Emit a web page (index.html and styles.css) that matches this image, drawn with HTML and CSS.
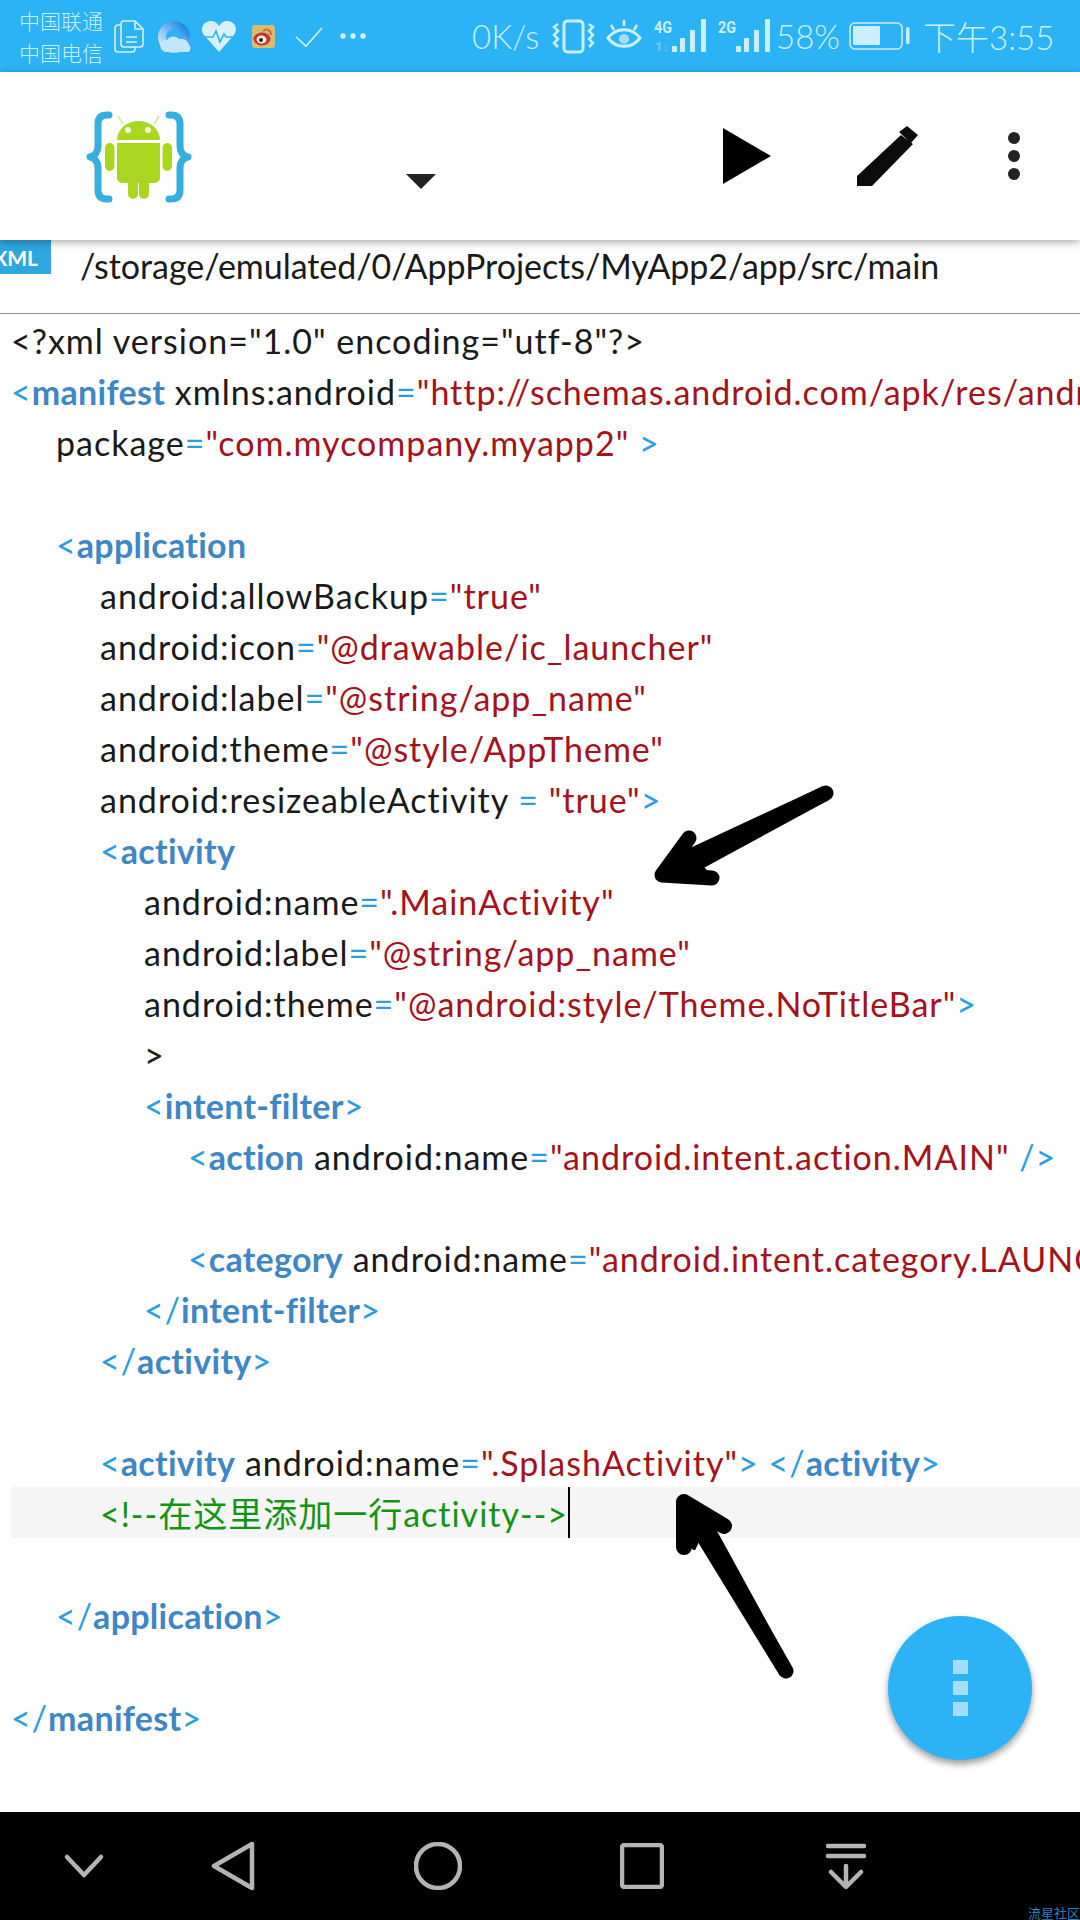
FILE: index.html
```html
<!DOCTYPE html>
<html lang="zh">
<head>
<meta charset="utf-8">
<title>AIDE</title>
<link rel="stylesheet" href="styles.css">
</head>
<body>
<div class="page">
  <header class="status">
    <div class="carriers"><span>中国联通</span><span>中国电信</span></div>
    <svg class="st-left" width="265" height="60" viewBox="110 6 265 60">
      <defs>
        <linearGradient id="brow" x1="0" y1="1" x2="1" y2="0">
          <stop offset="0" stop-color="#d9f0fd"/><stop offset="1" stop-color="#1483e6"/>
        </linearGradient>
      </defs>
      <g fill="none" stroke="#d8f1fd" stroke-width="1.6" stroke-linejoin="round">
        <path d="M121 25h-3a3 3 0 0 0-3 3v21a3 3 0 0 0 3 3h14a3 3 0 0 0 3-3v-2"/>
        <path d="M124 21h11l8 8v15a3 3 0 0 1-3 3h-16a3 3 0 0 1-3-3v-20a3 3 0 0 1 3-3z"/>
        <path d="M135 21v8h8"/>
        <path d="M126 37h11M126 42h11"/>
      </g>
      <circle cx="174" cy="37" r="12" fill="none" stroke="url(#brow)" stroke-width="8"/>
      <path d="M166 52a6 6 0 0 1 1-12c2-4 9-5 12-1 5-1 9 2 10 6 2 1 2 7-1 7z" fill="#c3e6fb"/>
      <path d="M219 52l-15-17c-5-7 0-14 7-14 4 0 6 2 8 5 2-3 4-5 8-5 7 0 12 7 7 14z" fill="#d8f1fd"/>
      <path d="M204 37h9l3-6 4 11 4-8 2 3h9" fill="none" stroke="#2db2f5" stroke-width="1.6"/>
      <rect x="252" y="25" width="23" height="23" rx="3" fill="#d5bf6c"/>
      <ellipse cx="262" cy="39" rx="8.5" ry="6.5" fill="#c8352f"/>
      <ellipse cx="261.500" cy="39.500" rx="5" ry="4" fill="#f4efe2"/>
      <circle cx="261" cy="40" r="2" fill="#222"/>
      <path d="M263 31c4-3 8-1 8 4" fill="none" stroke="#d9662c" stroke-width="2"/>
      <path d="M296 37l10 9 16-18" fill="none" stroke="#d8f1fd" stroke-width="1.6"/>
      <g fill="#d8f1fd"><circle cx="343" cy="36" r="2.700"/><circle cx="353" cy="36" r="2.700"/><circle cx="363" cy="36" r="2.700"/></g>
    </svg>
    <span class="speed">0K/s</span>
    <svg class="st-right" width="220" height="60" viewBox="550 6 220 60">
      <g fill="none" stroke="#cdeefd" stroke-width="3">
        <rect x="564" y="21" width="19" height="31" rx="3.500"/>
        <path d="M558 24l-4 3 4 4-4 4 4 4-4 4 4 4M589 24l4 3-4 4 4 4-4 4 4 4-4 4" stroke-width="2.500"/>
        <path d="M608 38c8-11 24-11 32 0-8 11-24 11-32 0z"/>
        <path d="M611 25l3 5M624 20v6M637 25l-3 5" stroke-width="2.500"/>
      </g>
      <circle cx="624" cy="39" r="5" fill="#a7dcf8"/>
      <text class="net" x="654" y="33" textLength="18" lengthAdjust="spacingAndGlyphs">4G</text>
      <text class="net dim" x="655" y="51">1↓</text>
      <text class="net" x="718" y="33" textLength="18" lengthAdjust="spacingAndGlyphs">2G</text>
      <g fill="#cdeefd">
        <rect x="672" y="46" width="5" height="6" rx="1"/><rect x="680" y="38" width="5" height="14" rx="1"/><rect x="690" y="30" width="5" height="22" rx="1"/><rect x="701" y="19" width="5" height="33" rx="1"/>
        <rect x="736" y="46" width="5" height="6" rx="1"/><rect x="744" y="38" width="5" height="14" rx="1"/><rect x="754" y="30" width="5" height="22" rx="1"/><rect x="765" y="19" width="5" height="33" rx="1"/>
      </g>
    </svg>
    <span class="pct">58%</span>
    <svg class="batt" width="62" height="30" viewBox="0 0 62 30">
      <rect x="1" y="2" width="52" height="26" rx="5" fill="none" stroke="#cdeefd" stroke-width="1.500"/>
      <rect x="4" y="5" width="27" height="19" rx="1" fill="#cdeefd"/>
      <rect x="57" y="6" width="3.500" height="17" rx="1.500" fill="#cdeefd"/>
    </svg>
    <span class="time">下午3:55</span>
  </header>

  <div class="toolbar">
    <svg class="logo" width="130" height="110" viewBox="0 0 130 110">
      <g fill="none" stroke="#35aee0" stroke-width="7" stroke-linecap="round" stroke-linejoin="round">
        <path d="M36 15h-2c-6 0-9 3-9 9v22c0 6-3 10-8 11 5 1 8 5 8 11v22c0 6 3 9 9 9h2"/>
        <path d="M96 15h2c6 0 9 3 9 9v22c0 6 3 10 8 11-5 1-8 5-8 11v22c0 6-3 9-9 9h-2"/>
      </g>
      <path d="M50 24l-5-8M81 24l5-8" stroke="#d6e59a" stroke-width="1.500"/>
      <g fill="#aad521">
        <path d="M44 40a21.500 19 0 0 1 43 0z"/>
        <path d="M44 43h43v35a5 5 0 0 1-5 5h-6v11a5 5 0 0 1-10 0v-11h-1v11a5 5 0 0 1-10 0v-11h-6a5 5 0 0 1-5-5z"/>
        <rect x="32" y="43" width="9.500" height="28" rx="4.700"/>
        <rect x="89.500" y="43" width="9.500" height="28" rx="4.700"/>
      </g>
      <circle cx="55" cy="30" r="3" fill="#f2f8d8"/>
      <circle cx="75" cy="30" r="3" fill="#f2f8d8"/>
    </svg>
    <div class="caret"></div>
    <svg class="tb-play" width="48" height="56" viewBox="0 0 48 56"><path d="M0 0l48 28L0 56z" fill="#000"/></svg>
    <svg class="tb-edit" width="62" height="60" viewBox="0 0 62 60"><path d="M0 60V50L44 9l12 9-41 42zM42 6l8-6 11 9-7 8z" fill="#0c0c0c"/></svg>
    <div class="kebab"><i></i><i></i><i></i></div>
  </div>

  <div class="pathbar">
    <div class="badge"><span>XML</span></div>
    <div class="path">/storage/emulated/0/AppProjects/MyApp2/app/src/main</div>
  </div>

  <main class="code">
    <div class="ln">&lt;?xml version="1.0" encoding="utf-8"?&gt;</div>
    <div class="ln"><b>&lt;</b><em>manifest</em> xmlns:android<b>=</b><s>"http://schemas.android.com/apk/res/android"</s></div>
    <div class="ln i1">package<b>=</b><s>"com.mycompany.myapp2"</s> <b>&gt;</b></div>
    <div class="ln"></div>
    <div class="ln i1"><b>&lt;</b><em>application</em></div>
    <div class="ln i2">android:allowBackup<b>=</b><s>"true"</s></div>
    <div class="ln i2">android:icon<b>=</b><s>"@drawable/ic_launcher"</s></div>
    <div class="ln i2">android:label<b>=</b><s>"@string/app_name"</s></div>
    <div class="ln i2">android:theme<b>=</b><s>"@style/AppTheme"</s></div>
    <div class="ln i2">android:resizeableActivity <b>=</b> <s>"true"</s><b>&gt;</b></div>
    <div class="ln i2"><b>&lt;</b><em>activity</em></div>
    <div class="ln i3">android:name<b>=</b><s>".MainActivity"</s></div>
    <div class="ln i3">android:label<b>=</b><s>"@string/app_name"</s></div>
    <div class="ln i3">android:theme<b>=</b><s>"@android:style/Theme.NoTitleBar"</s><b>&gt;</b></div>
    <div class="ln i3">&gt;</div>
    <div class="ln i3"><b>&lt;</b><em>intent-filter</em><b>&gt;</b></div>
    <div class="ln i4"><b>&lt;</b><em>action</em> android:name<b>=</b><s>"android.intent.action.MAIN"</s> <b>/&gt;</b></div>
    <div class="ln"></div>
    <div class="ln i4"><b>&lt;</b><em>category</em> android:name<b>=</b><s>"android.intent.category.LAUNCHER"</s></div>
    <div class="ln i3"><b>&lt;/</b><em>intent-filter</em><b>&gt;</b></div>
    <div class="ln i2"><b>&lt;/</b><em>activity</em><b>&gt;</b></div>
    <div class="ln"></div>
    <div class="ln i2"><b>&lt;</b><em>activity</em> android:name<b>=</b><s>".SplashActivity"</s><b>&gt;</b> <b>&lt;/</b><em>activity</em><b>&gt;</b></div>
    <div class="ln i2 cur"><span class="cmt">&lt;!--在这里添加一行activity--&gt;</span><span class="caretline"></span></div>
    <div class="ln"></div>
    <div class="ln i1"><b>&lt;/</b><em>application</em><b>&gt;</b></div>
    <div class="ln"></div>
    <div class="ln"><b>&lt;/</b><em>manifest</em><b>&gt;</b></div>
  </main>

  <nav class="navbar">
    <svg class="nv-chev" width="44" height="28" viewBox="0 0 44 28"><path d="M5 5l17 18L39 5" fill="none" stroke="#b4b4b4" stroke-width="4.500" stroke-linecap="round" stroke-linejoin="round"/></svg>
    <svg class="nv-back" width="44" height="52" viewBox="0 0 44 52"><path d="M41 4v44L3 26z" fill="none" stroke="#b4b4b4" stroke-width="4.500" stroke-linejoin="round"/></svg>
    <svg class="nv-home" width="48" height="48" viewBox="0 0 48 48"><circle cx="24" cy="24" r="22" fill="none" stroke="#b4b4b4" stroke-width="4.500"/></svg>
    <svg class="nv-rect" width="44" height="46" viewBox="0 0 44 46"><rect x="2" y="2" width="40" height="42" rx="2.500" fill="none" stroke="#b4b4b4" stroke-width="4.500"/></svg>
    <svg class="nv-drop" width="40" height="46" viewBox="0 0 40 46"><path d="M2 3h36M2 13h36M20 23v20M5 29l15 15 15-15" fill="none" stroke="#b4b4b4" stroke-width="4.500" stroke-linecap="round" stroke-linejoin="round"/></svg>
    <span class="mark">流星社区</span>
  </nav>

  <div class="fab"><i></i><i></i><i></i></div>

  <svg class="notes" width="1080" height="1920" viewBox="0 0 1080 1920">
    <g fill="#000" stroke="#000" stroke-linecap="round" stroke-linejoin="round">
      <path d="M826 793L668 870" fill="none" stroke-width="15"/>
      <path d="M823 786L829 800 700 870 690 848z" stroke="none"/>
      <path d="M689 838L662 875l50 3" fill="none" stroke-width="15"/>
      <path d="M689 838L662 875l50 3 -10-10 -12-20z" stroke-width="4"/>
      <path d="M786 1671L694 1510" fill="none" stroke-width="15"/>
      <path d="M792 1668L780 1676 685 1521 705 1509z" stroke="none"/>
      <path d="M684 1547L684 1502l40 24" fill="none" stroke-width="16"/>
      <path d="M684 1502l40 24-20 0-10 22z" stroke-width="4"/>
    </g>
  </svg>
</div>
</body>
</html>
```
FILE: styles.css
```css
* { box-sizing: border-box; }
html, body { margin: 0; padding: 0; background: #fff; }
.page {
  position: relative;
  width: 1080px;
  height: 1920px;
  overflow: hidden;
  display: flex;
  flex-direction: column;
  font-family: Lato, "Noto Sans CJK SC", sans-serif;
  color: #111;
}

/* status bar */
.status {
  flex: none;
  height: 72px;
  background: #2bb3f6;
  display: flex;
  align-items: center;
  color: #cdeefd;
}
.carriers {
  margin-left: 19px;
  width: 91px;
  display: flex;
  flex-direction: column;
  font: 300 21px/32px "Noto Sans CJK SC", sans-serif;
}
.st-left { flex: none; }
.speed { margin-left: 97px; font-weight: 300; font-size: 33px; }
.st-right { flex: none; margin-left: auto; }
.pct { flex: none; width: 73px; margin-left: 6px; font-weight: 300; font-size: 33px; }
.batt { flex: none; }
.time {
  flex: none;
  width: 157px;
  font-weight: 300;
  font-size: 33px;
  margin-left: 12px;
}
.net { font: 700 17px Roboto, sans-serif; fill: #cdeefd; }
.net.dim { opacity: .45; font-size: 13px; }

/* toolbar */
.toolbar {
  flex: none;
  position: relative;
  z-index: 2;
  height: 168px;
  background: #fff;
  box-shadow: 0 2px 8px rgba(0,0,0,.35);
  display: flex;
  align-items: center;
}
.logo { flex: none; margin: -2px 0 0 73px; }
.caret {
  flex: none;
  width: 0;
  height: 0;
  margin: 50px 0 0 203px;
  border-left: 15px solid transparent;
  border-right: 15px solid transparent;
  border-top: 15px solid #222;
}
.tb-play { flex: none; margin-left: 287px; }
.tb-edit { flex: none; margin-left: 86px; }
.kebab {
  flex: none;
  margin-left: 89px;
  display: flex;
  flex-direction: column;
  gap: 6px;
}
.kebab i { display: block; width: 12px; height: 12px; border-radius: 50%; background: #222; }

/* path bar */
.pathbar {
  flex: none;
  height: 74px;
  display: flex;
  align-items: flex-start;
  border-bottom: 1px solid #8c8c8c;
}
.badge {
  flex: none;
  width: 51px;
  height: 34px;
  background: #2ea6df;
  color: #fff;
  font-weight: 700;
  font-size: 21px;
  line-height: 36px;
  overflow: hidden;
  display: flex;
  justify-content: flex-end;
  padding-right: 13px;
  white-space: nowrap;
}
.path {
  margin-left: 29px;
  font-size: 34px;
  letter-spacing: -.05px;
  line-height: 52px;
  color: #1a1a1a;
  white-space: nowrap;
}

/* code */
.code {
  flex: 1;
  min-height: 0;
  font-size: 34px;
  letter-spacing: 1px;
  line-height: 54px;
  overflow: hidden;
  color: #1a1a1a;
}
.ln { height: 51px; padding-left: 11px; white-space: nowrap; overflow: hidden; }
.i1 { padding-left: 56px; }
.i2 { padding-left: 100px; }
.i3 { padding-left: 144px; }
.i4 { padding-left: 188px; }
.ln b { font-weight: 400; color: #2a9de0; }
.ln em { font-style: normal; font-weight: 700; letter-spacing: .3px; color: #3f86c4; }
.ln s { text-decoration: none; color: #a4121c; }
.cur { background: #f5f5f5; margin-left: 11px; padding-left: 89px; }
.cmt { color: #129412; }
.caretline { display: inline-block; width: 2px; height: 51px; background: #000; vertical-align: top; }

/* nav */
.navbar {
  flex: none;
  position: relative;
  height: 108px;
  background: #000;
  display: flex;
  align-items: center;
}
.navbar svg { flex: none; }
.nv-chev { margin-left: 62px; }
.nv-back { margin-left: 105px; }
.nv-home { margin-left: 159px; }
.nv-rect { margin-left: 158px; }
.nv-drop { margin-left: 162px; }
.mark {
  position: absolute;
  right: 0;
  bottom: 0;
  font: 13px/14px "Noto Sans CJK SC", sans-serif;
  color: #2b7fc4;
  white-space: nowrap;
}

/* floating button */
.fab {
  position: absolute;
  left: 888px;
  top: 1616px;
  width: 144px;
  height: 144px;
  border-radius: 50%;
  background: #2bb3f6;
  box-shadow: 0 4px 7px rgba(0,0,0,.4);
  display: flex;
  flex-direction: column;
  align-items: center;
  justify-content: center;
  gap: 7px;
}
.fab i { display: block; width: 15px; height: 14px; background: #a5dcf8; }

.notes { position: absolute; left: 0; top: 0; pointer-events: none; z-index: 3; }
```
